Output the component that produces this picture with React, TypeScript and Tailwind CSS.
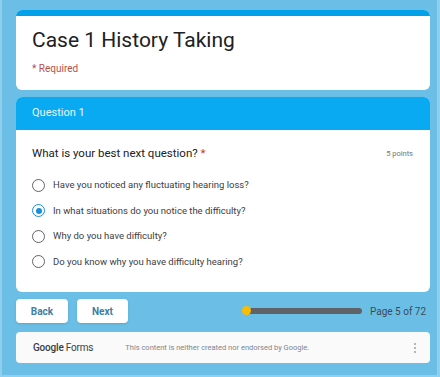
import React from "react";

const options = [
  "Have you noticed any fluctuating hearing loss?",
  "In what situations do you notice the difficulty?",
  "Why do you have difficulty?",
  "Do you know why you have difficulty hearing?",
];

export default function App() {
  const selected = 1;

  return (
    <div
      className="w-[440px] h-[377px] bg-[#6bbfe6] pl-[14px] pr-[7px] pt-[10px] border-l-2 border-b-2 border-r-[3px] border-[#8fd0ef] overflow-hidden"
      style={{ fontFamily: "Roboto, 'Liberation Sans', sans-serif" }}
    >
      {/* title card */}
      <div className="bg-white rounded-[6px] overflow-hidden h-[80px]">
        <div className="h-[6px] bg-[#03a0ea]" />
        <div className="pl-4 pt-[10px]">
          <h1 className="text-[21px] leading-[28px] text-[#202124]">Case 1 History Taking</h1>
          <p className="mt-[9px] text-[10px] leading-[12px] text-[#b5504a]">* Required</p>
        </div>
      </div>

      {/* question card */}
      <div className="mt-[7px] bg-white rounded-[6px] overflow-hidden h-[195px]">
        <div className="h-[33px] bg-[#0aaaf2] pl-4 flex items-center">
          <span className="text-[11px] text-[#e8f6fd]">Question 1</span>
        </div>
        <div className="pl-4 pr-[17px] pt-[15px]">
          <div className="flex justify-between items-center">
            <span className="text-[11.5px] text-[#202124]">
              What is your best next question? <span className="text-[#d93025]">*</span>
            </span>
            <span className="text-[7.5px] text-[#70757a]">5 points</span>
          </div>
          <div className="mt-[16px] flex flex-col gap-[11.5px]">
            {options.map((opt, idx) => (
              <div key={idx} className="flex items-center h-[14px]">
                <div
                  className={`w-[13px] h-[13px] rounded-full border-[1.5px] flex items-center justify-center ${
                    idx === selected ? "border-[#1a8fd8]" : "border-[#5f6368]"
                  }`}
                >
                  {idx === selected && <div className="w-[6px] h-[6px] rounded-full bg-[#1a8fd8]" />}
                </div>
                <span className="ml-[8px] text-[9.5px] text-[#3c4043]">{opt}</span>
              </div>
            ))}
          </div>
        </div>
      </div>

      {/* nav */}
      <div className="mt-[7px] flex items-center h-[24px]">
        <button className="w-[52px] h-[24px] bg-white rounded-[4px] text-[10px] font-bold text-[#3d7ea6] shadow-sm">
          Back
        </button>
        <button className="ml-[9px] w-[51px] h-[24px] bg-white rounded-[4px] text-[10px] font-bold text-[#3d7ea6] shadow-sm">
          Next
        </button>
        <div className="ml-[118px] relative w-[116px] h-[6px] rounded-full bg-[#5f6368]">
          <div className="absolute -left-[4px] -top-[2px] w-[9px] h-[9px] rounded-full bg-[#fbbc04]" />
        </div>
        <span className="ml-[8px] whitespace-nowrap text-[10px] text-[#3b4a58]">Page 5 of 72</span>
      </div>

      {/* footer */}
      <div className="mt-[9px] bg-[#fafafa] rounded-[4px] h-[31px] flex items-center pl-[17px] pr-[14px]">
        <span className="text-[10px] text-[#3c4043] tracking-[-0.2px] whitespace-nowrap">
          <span className="font-medium">Google</span> Forms
        </span>
        <span className="ml-[32px] text-[7.5px] text-[#80868b] whitespace-nowrap">
          This content is neither created nor endorsed by Google.
        </span>
        <div className="ml-auto flex flex-col gap-[2px]">
          <div className="w-[2px] h-[2px] rounded-full bg-[#9aa0a6]" />
          <div className="w-[2px] h-[2px] rounded-full bg-[#9aa0a6]" />
          <div className="w-[2px] h-[2px] rounded-full bg-[#9aa0a6]" />
        </div>
      </div>
    </div>
  );
}
